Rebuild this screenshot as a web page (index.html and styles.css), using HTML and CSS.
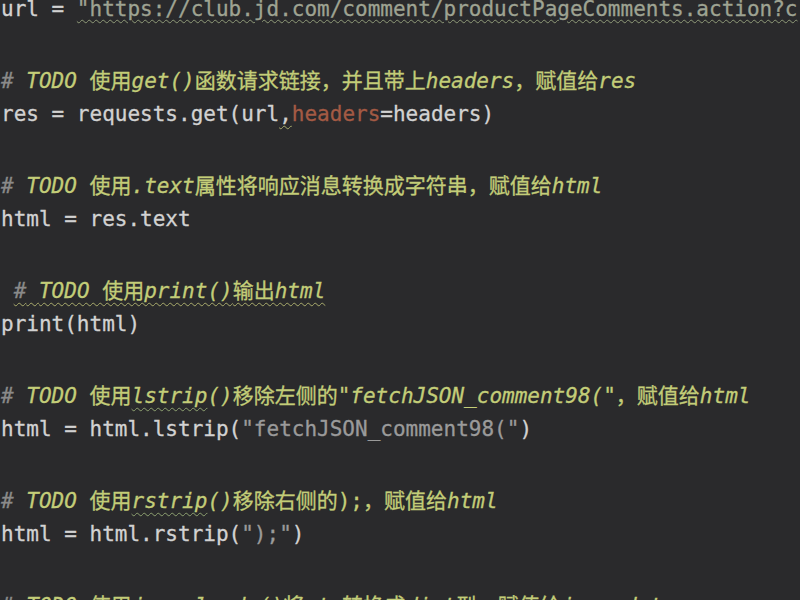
FILE: index.html
```html
<!DOCTYPE html>
<html lang="zh-CN">
<head>
<meta charset="utf-8">
<title>code</title>
<link rel="stylesheet" href="styles.css">
</head>
<body>
<div class="editor">
  <div class="line">url = <span class="str wavy-str">"https://club.jd.com/comment/productPageComments.action?c</span></div>
  <div class="line"></div>
  <div class="line"><span class="hash">#</span> <span class="todo">TODO <span class="cn">使用</span>get()<span class="cn">函数请求链接，并且带上</span>headers<span class="cn">，赋值给</span>res</span></div>
  <div class="line">res = requests.get(url<span class="warn">,</span><span class="kw">headers</span>=headers)</div>
  <div class="line"></div>
  <div class="line"><span class="hash">#</span> <span class="todo">TODO <span class="cn">使用</span>.text<span class="cn">属性将响应消息转换成字符串，赋值给</span>html</span></div>
  <div class="line">html = res.text</div>
  <div class="line"></div>
  <div class="line"> <span class="wavy-todo"><span class="hash">#</span> <span class="todo">TODO <span class="cn">使用</span>print()<span class="cn">输出</span>html</span></span></div>
  <div class="line">print(html)</div>
  <div class="line"></div>
  <div class="line"><span class="hash">#</span> <span class="todo">TODO <span class="cn">使用</span><span class="spell">lstrip</span>()<span class="cn">移除左侧的</span>"fetchJSON_comment98("<span class="cn">，赋值给</span>html</span></div>
  <div class="line">html = html.lstrip(<span class="str dim">"fetchJSON_comment98("</span>)</div>
  <div class="line"></div>
  <div class="line"><span class="hash">#</span> <span class="todo">TODO <span class="cn">使用</span><span class="spell">rstrip</span>()<span class="cn">移除右侧的</span><span class="up">);</span><span class="cn">，赋值给</span>html</span></div>
  <div class="line">html = html.rstrip(<span class="str dim">");"</span>)</div>
  <div class="line"></div>
  <div class="line"><span class="hash">#</span> <span class="todo">TODO <span class="cn">使用</span>json.loads()<span class="cn">将</span>str<span class="cn">转换成</span>dict<span class="cn">型，赋值给</span>json_data</span></div>
</div>
</body>
</html>
```

FILE: styles.css
```css
html, body {
  margin: 0;
  padding: 0;
  background: #2a2a2c;
  overflow: hidden;
}

.editor {
  margin-top: -8px;
  padding-left: 1px;
  font-family: "DejaVu Sans Mono", "Liberation Mono", "Noto Sans CJK SC", monospace;
  font-size: 21px;
  line-height: 35px;
  color: #d2d2d2;
  -webkit-text-stroke: 0.3px;
}

.line {
  height: 35px;
  white-space: pre;
}

.hash {
  color: #8a8a8a;
  font-style: italic;
}

.todo {
  color: #c3cd78;
  font-style: italic;
}

.cn {
  font-family: "Noto Sans CJK SC", sans-serif;
  font-style: normal;
}

.up {
  font-style: normal;
}

.str {
  color: #9ea392;
}

.dim {
  color: #9a9a9a;
}

.wavy-str {
  text-decoration: underline wavy #8f9a78;
  text-decoration-thickness: 1px;
  text-underline-offset: 3px;
}

.wavy-todo {
  text-decoration: underline wavy #a9ab6c;
  text-decoration-thickness: 1px;
  text-underline-offset: 4px;
}

.spell {
  text-decoration: underline wavy #8da070;
  text-decoration-thickness: 1px;
  text-underline-offset: 4px;
}

.warn {
  text-decoration: underline wavy #a6a96a;
  text-decoration-thickness: 1px;
  text-underline-offset: 4px;
}

.kw {
  color: #a45a44;
}
```
